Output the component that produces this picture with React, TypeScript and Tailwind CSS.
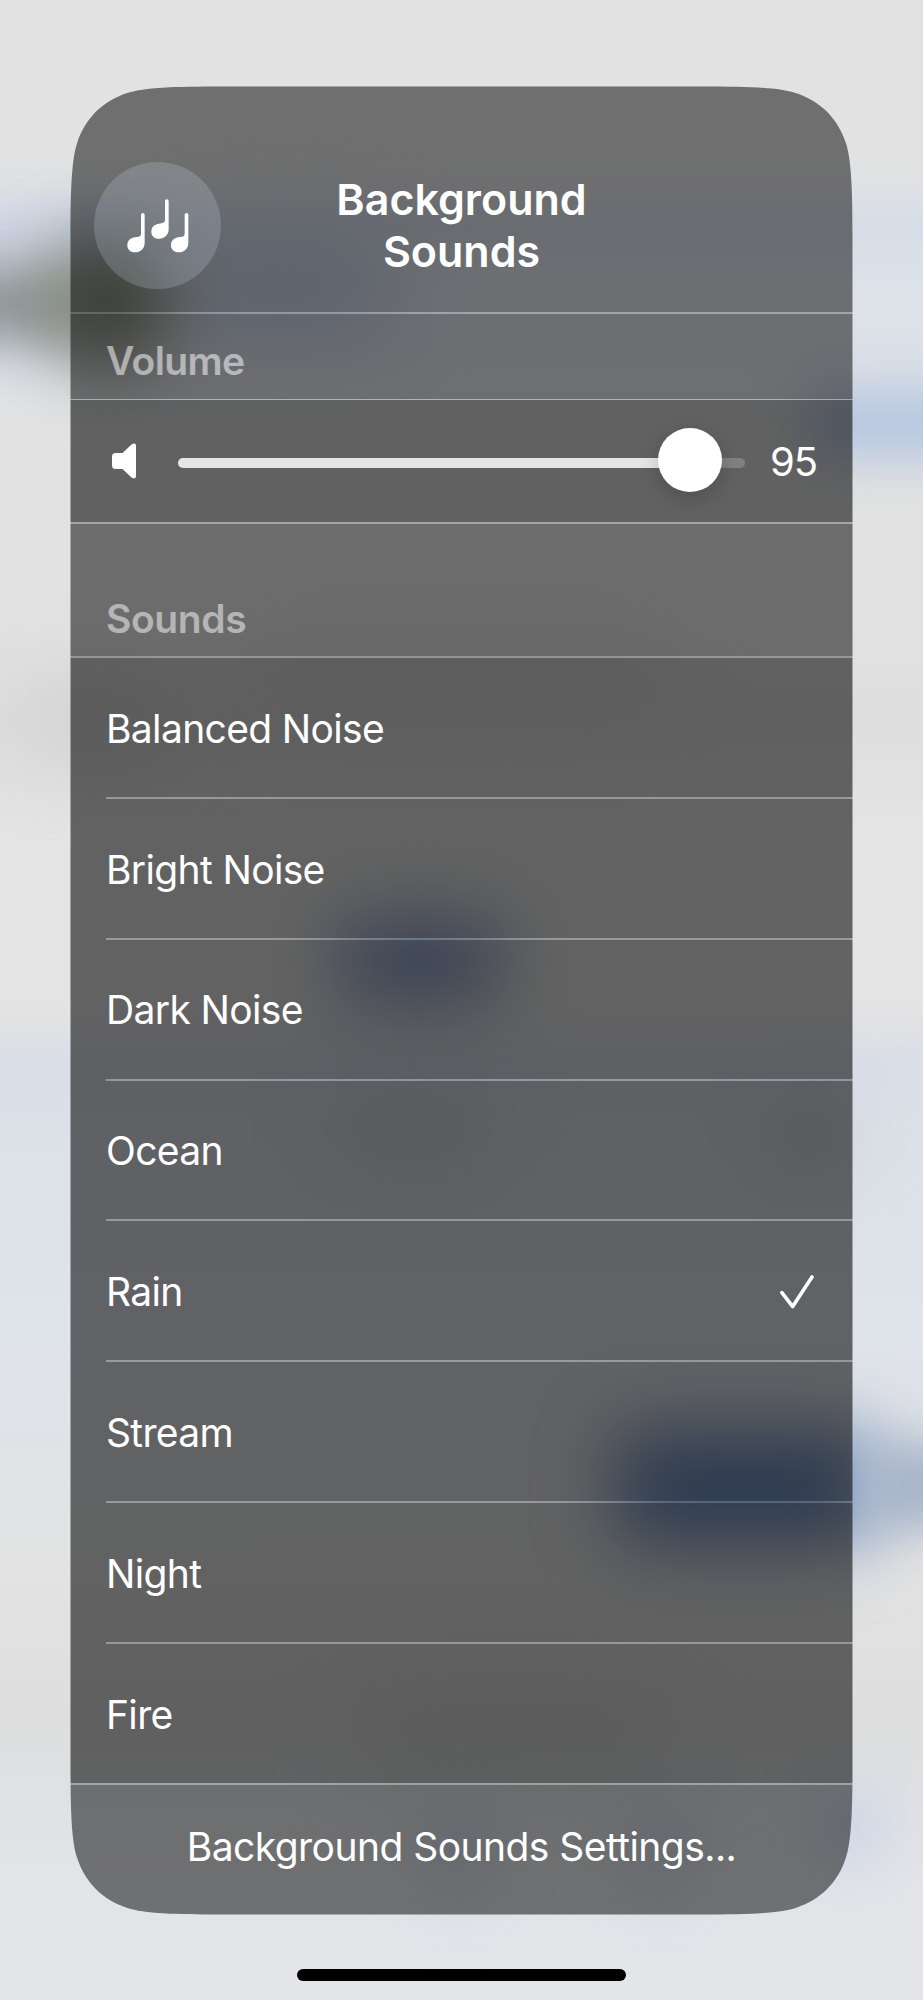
import React from "react";

const SOUNDS = [
  "Balanced Noise",
  "Bright Noise",
  "Dark Noise",
  "Ocean",
  "Rain",
  "Stream",
  "Night",
  "Fire",
];

const NOTE =
  "M151 193.500a5.500 5.500 0 0 1 11 0V277C162 294 150 306 133 306C119 306 110 298 110 285C110 271 119 263 133 261L144 259Q151 258 151 250Z";

// Soft colour patches behind the panel
function Wallpaper() {
  return (
    <div className="absolute inset-0 overflow-hidden bg-[linear-gradient(180deg,#e2e2e2_0px,#e2e2e2_150px,#e0e1e4_185px,#d6dde6_225px,#dde2e9_290px,#dde1e8_350px,#e2e2e2_430px,#e2e2e2_620px,#dedede_720px,#e4e4e4_830px,#e5e4e4_1000px,#d9dee7_1065px,#dce1e8_1130px,#dfe3ea_1350px,#e0e3e6_1440px,#e3e3e3_1560px,#dedede_1720px,#dfe1e4_1800px,#e3e4e8_1890px,#e4e5e9_2000px)]">
      <div className="absolute -left-20 top-[218px] h-10 w-60 bg-[#cbd3e4] blur-[24px]" />
      <div className="absolute left-[170px] top-[240px] h-24 w-56 rounded-full bg-[#bcc8df] blur-[42px]" />
      <div className="absolute -left-24 top-[266px] h-[76px] w-44 bg-[#8f9699] blur-[25px]" />
      <div className="absolute left-[46px] top-[240px] h-[124px] w-[124px] rounded-[50px] bg-[#7b8173] blur-[34px]" />
      <div className="absolute left-[808px] top-[394px] h-[60px] w-52 bg-[#adc1e0] blur-[28px]" />
      <div className="absolute left-5 top-[690px] h-16 w-36 bg-[#cfcfcf] blur-[40px]" />
      <div className="absolute left-[250px] top-[650px] h-14 w-[420px] bg-[#d4d4d4] blur-[40px]" />
      <div className="absolute left-[335px] top-[915px] h-[92px] w-[170px] rounded-[40px] bg-[#8b9ec4] blur-[35px]" />
      <div className="absolute left-[330px] top-[1100px] h-16 w-40 bg-[#cad0d8] blur-[40px]" />
      <div className="absolute left-[770px] top-[1105px] h-16 w-20 bg-[#cad0d8] blur-[34px]" />
      <div className="absolute left-[614px] top-[1430px] h-[114px] w-[262px] rounded-[30px] bg-[#6b8ab9] blur-[36px]" />
      <div className="absolute left-[866px] top-[1446px] h-[80px] w-36 bg-[#a5b3c7] blur-[24px]" />
      <div className="absolute left-[360px] top-[1690px] h-20 w-[300px] bg-[#d2d4d2] blur-[40px]" />
      <div className="absolute left-[430px] top-[1800px] h-24 w-14 bg-[#c9d4e0] blur-[32px]" />
      <div className="absolute left-[630px] top-[1800px] h-24 w-14 bg-[#c9d4e0] blur-[32px]" />
      <div className="absolute left-[825px] top-[1795px] h-16 w-12 bg-[#c3d1e8] blur-[28px]" />
    </div>
  );
}

function Divider() {
  return <div className="h-0.5 shrink-0 bg-black/[0.27]" />;
}

function SoundRow({ name, selected, last }: { name: string; selected: boolean; last: boolean }) {
  return (
    <div className={last ? "flex flex-1 flex-col" : "flex h-[140.85px] shrink-0 flex-col"}>
      <div className="flex flex-1 items-center justify-between bg-black/[0.57] pt-[3px] pr-[39px] pl-9">
        <span className="text-[39px] tracking-[-0.65px]">{name}</span>
        {selected && (
          <svg className="h-[34px] w-[34px]" viewBox="0 0 34 34" fill="none">
            <path
              d="M1.900 17.700L12.700 31.600L32 1.900"
              stroke="white"
              strokeWidth="3.600"
              strokeLinecap="round"
              strokeLinejoin="round"
            />
          </svg>
        )}
      </div>
      {!last && (
        <div className="flex h-0.5 shrink-0">
          <div className="w-9 bg-black/[0.57]" />
          <div className="flex-1 bg-black/[0.32]" />
        </div>
      )}
    </div>
  );
}

export default function App() {
  const volume = 95;

  return (
    <div className="relative h-[2000px] w-[923px] overflow-hidden font-['Inter',sans-serif] text-white">
      <Wallpaper />

      <div className="relative flex h-full flex-col items-center pt-[86px]">
        <main className="flex h-[1829px] w-[783px] flex-col [clip-path:path('M150.500_.5C105_.5_74.300_1.500_57.400_7C32.600_14.900_14.900_32.600_7_57.400C1.500_74.300_.5_105_.5_150.500V1678.500C.5_1724_1.500_1754.700_7_1771.600C14.900_1796.400_32.600_1814.100_57.400_1822C74.300_1827.500_105_1828.500_150.500_1828.500H632.500C678_1828.500_708.700_1827.500_725.600_1822C750.400_1814.100_768.100_1796.400_776_1771.600C781.500_1754.700_782.500_1724_782.500_1678.500V150.500C782.500_105_781.500_74.300_776_57.400C768.100_32.600_750.400_14.900_725.600_7C708.700_1.500_678_.5_632.500_.5Z')]">
          <header className="grid h-[226px] shrink-0 grid-cols-[127px_1fr_127px] items-center bg-black/[0.51] px-6 pt-[53px]">
            <div className="flex size-[127px] items-center justify-center rounded-full bg-[#d5e4f6]/20">
              <svg className="h-[54px] w-[62px]" viewBox="109 146 186 162" fill="white">
                <path d={NOTE} />
                <path d={NOTE} transform="translate(72 -41)" />
                <path d={NOTE} transform="translate(131 0)" />
              </svg>
            </div>
            <h1 className="pb-px text-center text-[43px] leading-[52px] font-semibold">
              Background
              <br />
              Sounds
            </h1>
          </header>
          <Divider />

          <h2 className="flex h-[85px] shrink-0 items-center bg-black/[0.51] pt-2.5 pl-9 text-[39px] font-semibold tracking-[-0.6px] text-white/[0.52]">
            Volume
          </h2>
          <div className="h-px shrink-0 bg-black/20" />

          <div className="flex h-[122px] shrink-0 items-center bg-black/[0.57] pr-9 pl-[42px]">
            <svg className="h-9 w-6" viewBox="0 0 24 36" fill="white">
              <path d="M3.500 10H10.500L19.500 1.500Q24 -1 24 3V33Q24 37 19.500 34.500L10.500 26H3.500Q0 26 0 22.500V13.500Q0 10 3.500 10Z" />
            </svg>
            <div className="relative ml-[42px] h-2.5 w-[567px] translate-y-0.5 rounded-full bg-white/20">
              <div className="h-full rounded-full bg-[#e5e4e9]" style={{ width: `${volume}%` }} />
              <div className="absolute -top-[30px] left-[479.500px] size-16 rounded-full bg-white shadow-[0_6px_20px_rgba(0,0,0,0.18)]" />
            </div>
            <span className="ml-auto pt-px text-[40px] tracking-[-1px]">{volume}</span>
          </div>
          <Divider />

          <h2 className="flex h-[132px] shrink-0 items-end bg-black/[0.52] pb-[13px] pl-9 text-[39px] leading-[48px] font-semibold tracking-[-0.4px] text-white/50">
            Sounds
          </h2>
          <div className="h-0.5 shrink-0 bg-black/[0.32]" />

          <section className="flex h-[1125px] shrink-0 flex-col">
            {SOUNDS.map((name, i) => (
              <SoundRow
                key={name}
                name={name}
                selected={name === "Rain"}
                last={i === SOUNDS.length - 1}
              />
            ))}
          </section>
          <Divider />

          <button className="flex-1 bg-black/[0.51] pb-[5px] text-center text-[39px] tracking-[-0.55px]">
            Background Sounds Settings...
          </button>
        </main>

        <div className="mt-[54px] h-3 w-[329px] rounded-full bg-black" />
      </div>
    </div>
  );
}
